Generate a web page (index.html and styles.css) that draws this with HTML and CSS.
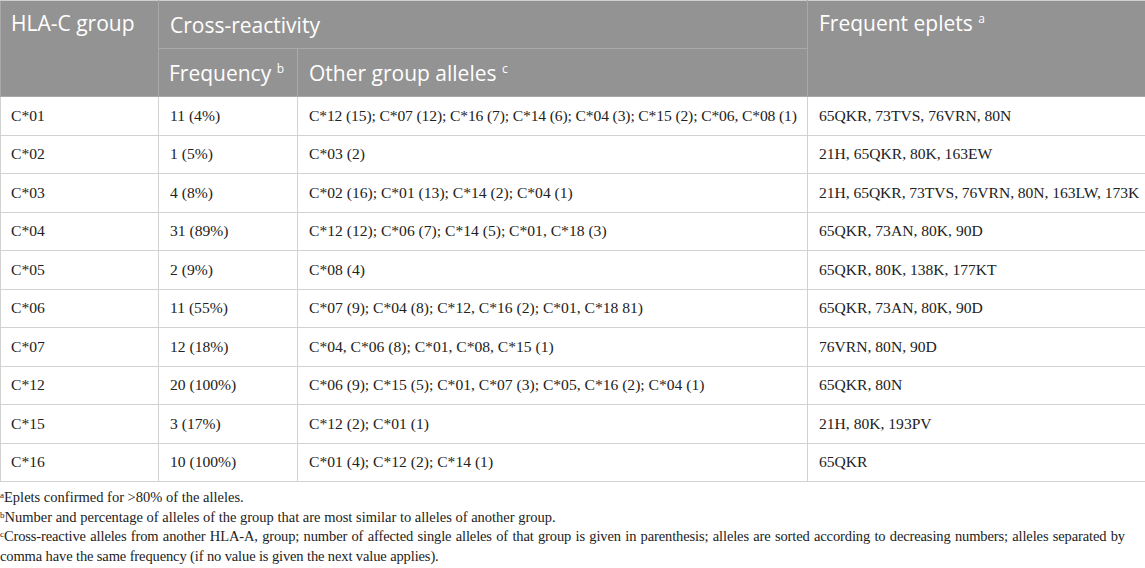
FILE: index.html
```html
<!DOCTYPE html>
<html lang="en">
<head>
<meta charset="utf-8">
<title>HLA-C cross-reactivity</title>
<link rel="stylesheet" href="styles.css">
</head>
<body>
<table class="data">
  <colgroup>
    <col class="c1"><col class="c2"><col class="c3"><col class="c4">
  </colgroup>
  <thead>
    <tr class="h1">
      <th rowspan="2" class="top">HLA-C group</th>
      <th colspan="2">Cross-reactivity</th>
      <th rowspan="2" class="top">Frequent eplets <sup>a</sup></th>
    </tr>
    <tr class="h2">
      <th>Frequency <sup>b</sup></th>
      <th>Other group alleles <sup>c</sup></th>
    </tr>
  </thead>
  <tbody>
    <tr><td>C*01</td><td>11 (4%)</td><td class="tight">C*12 (15); C*07 (12); C*16 (7); C*14 (6); C*04 (3); C*15 (2); C*06, C*08 (1)</td><td>65QKR, 73TVS, 76VRN, 80N</td></tr>
    <tr><td>C*02</td><td>1 (5%)</td><td>C*03 (2)</td><td>21H, 65QKR, 80K, 163EW</td></tr>
    <tr><td>C*03</td><td>4 (8%)</td><td>C*02 (16); C*01 (13); C*14 (2); C*04 (1)</td><td class="slim">21H, 65QKR, 73TVS, 76VRN, 80N, 163LW, 173K</td></tr>
    <tr><td>C*04</td><td>31 (89%)</td><td>C*12 (12); C*06 (7); C*14 (5); C*01, C*18 (3)</td><td>65QKR, 73AN, 80K, 90D</td></tr>
    <tr><td>C*05</td><td>2 (9%)</td><td>C*08 (4)</td><td>65QKR, 80K, 138K, 177KT</td></tr>
    <tr><td>C*06</td><td>11 (55%)</td><td>C*07 (9); C*04 (8); C*12, C*16 (2); C*01, C*18 81)</td><td>65QKR, 73AN, 80K, 90D</td></tr>
    <tr><td>C*07</td><td>12 (18%)</td><td>C*04, C*06 (8); C*01, C*08, C*15 (1)</td><td>76VRN, 80N, 90D</td></tr>
    <tr><td>C*12</td><td>20 (100%)</td><td>C*06 (9); C*15 (5); C*01, C*07 (3); C*05, C*16 (2); C*04 (1)</td><td>65QKR, 80N</td></tr>
    <tr><td>C*15</td><td>3 (17%)</td><td>C*12 (2); C*01 (1)</td><td>21H, 80K, 193PV</td></tr>
    <tr><td>C*16</td><td>10 (100%)</td><td>C*01 (4); C*12 (2); C*14 (1)</td><td>65QKR</td></tr>
  </tbody>
</table>
<div class="notes">
  <p><sup>a</sup>Eplets confirmed for &gt;80% of the alleles.</p>
  <p><sup>b</sup>Number and percentage of alleles of the group that are most similar to alleles of another group.</p>
  <p class="squeeze"><sup>c</sup>Cross-reactive alleles from another HLA-A, group; number of affected single alleles of that group is given in parenthesis; alleles are sorted according to decreasing numbers; alleles separated by comma have the same frequency (if no value is given the next value applies).</p>
</div>
</body>
</html>
```
FILE: styles.css
```css
html, body {
  margin: 0;
  padding: 0;
  background: #ffffff;
}

.data {
  width: 1145px;
  table-layout: fixed;
  border-collapse: collapse;
  border: 1px solid #cfcfcf;
}

.c1 { width: 158px; }
.c2 { width: 139px; }
.c3 { width: 510px; }
.c4 { width: 338px; }

.data th {
  background: #939393;
  color: #ffffff;
  font-family: "Open Sans", "Noto Sans", sans-serif;
  font-size: 21px;
  font-weight: 400;
  text-align: left;
  padding: 0 11px;
  height: 47px;
  vertical-align: middle;
  border: 1px solid #a9a9a9;
  border-top-color: #cfcfcf;
}

.data th:first-child {
  padding-left: 10px;
}

.data th.top {
  vertical-align: top;
  padding-top: 8px;
}

.data th sup {
  font-size: 12px;
  vertical-align: 8px;
  line-height: 0;
}

.data tbody tr {
  height: 38.5px;
}

.data td {
  font-family: "Liberation Serif", "Times New Roman", serif;
  font-size: 15.6px;
  color: #222222;
  padding: 0 11px;
  border: 1px solid #d2d2d2;
  white-space: nowrap;
  vertical-align: middle;
}

.data td:first-child {
  padding-left: 10px;
}

.data td.tight {
  letter-spacing: -0.13px;
}

.data td.slim {
  letter-spacing: -0.05px;
}

.notes {
  margin-top: 6px;
  font-family: "Liberation Serif", "Times New Roman", serif;
  font-size: 14.5px;
  color: #222222;
}

.notes p {
  margin: 0;
  line-height: 19.7px;
}

.notes sup {
  font-size: 9px;
  vertical-align: 4px;
  line-height: 0;
}

.notes .squeeze {
  width: 1125px;
  letter-spacing: -0.12px;
  text-align: justify;
}
```
